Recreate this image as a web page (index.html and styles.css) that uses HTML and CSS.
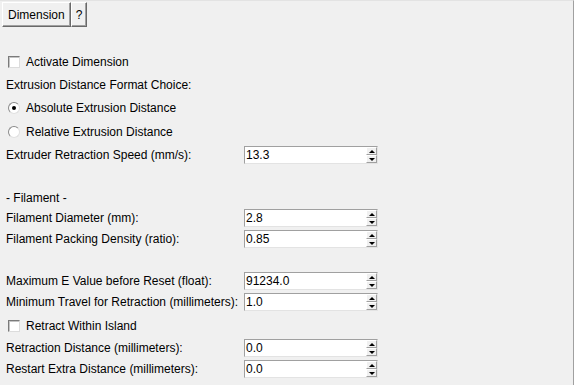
FILE: index.html
```html
<!DOCTYPE html>
<html lang="en">
<head>
<meta charset="UTF-8" />
<title>Dimension</title>
<link rel="stylesheet" href="styles.css">
</head>
<body>
  <div class="window">
    <div class="toolbar">
      <button class="tab">Dimension</button>
      <button class="tab help">?</button>
    </div>

    <div class="form">
      <label class="check-row first">
        <span class="checkbox"></span>
        <span>Activate Dimension</span>
      </label>

      <div class="text-row">Extrusion Distance Format Choice:</div>

      <label class="radio-row">
        <span class="radio checked"></span>
        <span>Absolute Extrusion Distance</span>
      </label>
      <label class="radio-row last">
        <span class="radio"></span>
        <span>Relative Extrusion Distance</span>
      </label>

      <div class="spin-row">
        <span class="label">Extruder Retraction Speed (mm/s):</span>
        <div class="spin"><span class="value">13.3</span><span class="arrows"><span class="up"></span><span class="down"></span></span></div>
      </div>

      <div class="blank"></div>
      <div class="text-row section">- Filament -</div>

      <div class="spin-row">
        <span class="label">Filament Diameter (mm):</span>
        <div class="spin"><span class="value">2.8</span><span class="arrows"><span class="up"></span><span class="down"></span></span></div>
      </div>
      <div class="spin-row">
        <span class="label">Filament Packing Density (ratio):</span>
        <div class="spin"><span class="value">0.85</span><span class="arrows"><span class="up"></span><span class="down"></span></span></div>
      </div>

      <div class="blank"></div>

      <div class="spin-row">
        <span class="label">Maximum E Value before Reset (float):</span>
        <div class="spin"><span class="value">91234.0</span><span class="arrows"><span class="up"></span><span class="down"></span></span></div>
      </div>
      <div class="spin-row">
        <span class="label">Minimum Travel for Retraction (millimeters):</span>
        <div class="spin"><span class="value">1.0</span><span class="arrows"><span class="up"></span><span class="down"></span></span></div>
      </div>

      <label class="check-row island">
        <span class="checkbox"></span>
        <span>Retract Within Island</span>
      </label>

      <div class="spin-row">
        <span class="label">Retraction Distance (millimeters):</span>
        <div class="spin"><span class="value">0.0</span><span class="arrows"><span class="up"></span><span class="down"></span></span></div>
      </div>
      <div class="spin-row">
        <span class="label">Restart Extra Distance (millimeters):</span>
        <div class="spin"><span class="value">0.0</span><span class="arrows"><span class="up"></span><span class="down"></span></span></div>
      </div>
    </div>
  </div>
</body>
</html>
```

FILE: styles.css
```css
:root {
  --face: #f0f0f0;
  --shadow: #a0a0a0;
  --dark: #696969;
  --light: #ffffff;
}

* {
  box-sizing: border-box;
}

html, body {
  margin: 0;
  height: 100%;
}

body {
  background: var(--face);
  font-family: "Liberation Sans", Arial, sans-serif;
  font-size: 12px;
  color: #000;
  overflow: hidden;
}

.window {
  width: 574px;
  height: 385px;
  border-top: 1px solid #e3e3e3;
  border-right: 1px solid var(--shadow);
}

.toolbar {
  display: flex;
  padding: 1px 0 0 2px;
  height: 27px;
}

.tab {
  font: inherit;
  height: 25px;
  padding: 0 5px;
  margin: 0;
  background: var(--face);
  color: #000;
  border: 1px solid;
  border-color: var(--light) var(--dark) var(--dark) var(--light);
  box-shadow: inset -1px -1px 0 var(--shadow);
}

.tab.help {
  padding: 0 4px;
}

.form {
  display: flex;
  flex-direction: column;
  padding-top: 22px;
}

.check-row,
.radio-row,
.text-row {
  display: flex;
  align-items: center;
  height: 23px;
  padding-left: 6px;
}

.check-row.island {
  height: 25px;
}

.radio-row.last {
  height: 26px;
}

.checkbox {
  width: 12px;
  height: 12px;
  margin: 0 6px 0 2px;
  background: #fff;
  border: 1px solid;
  border-color: #7a7a7a #dcdcdc #dcdcdc #7a7a7a;
  box-shadow: inset 1px 1px 0 #c4c4c4;
}

.radio {
  position: relative;
  width: 12px;
  height: 12px;
  margin: 0 6px 0 2px;
  border-radius: 50%;
  background: #fff;
  border: 1px solid;
  border-color: #8a8a8a #e0e0e0 #e0e0e0 #8a8a8a;
}

.radio.checked::after {
  content: "";
  position: absolute;
  left: 3px;
  top: 3px;
  width: 4px;
  height: 4px;
  border-radius: 50%;
  background: #000;
}

.spin-row {
  display: flex;
  align-items: flex-start;
  height: 21px;
  padding: 1px 0 0 6px;
}

.spin-row .label,
.text-row {
  white-space: nowrap;
}

.spin-row .label {
  width: 238px;
  line-height: 18px;
}

.blank {
  height: 21px;
}

.text-row.section {
  height: 21px;
}

.spin {
  display: flex;
  width: 134px;
  height: 18px;
  background: #fff;
  border: 1px solid;
  border-color: #a0a0a0 #e3e3e3 #e3e3e3 #a0a0a0;
}

.spin .value {
  flex: 1;
  line-height: 16px;
  padding-left: 1px;
}

.arrows {
  display: flex;
  flex-direction: column;
  width: 11px;
}

.arrows span {
  position: relative;
  flex: 1;
  background: var(--face);
  border: 1px solid;
  border-color: var(--light) var(--shadow) var(--shadow) var(--light);
}

.arrows span::after {
  content: "";
  position: absolute;
  left: 2px;
  top: 2px;
  border-left: 3px solid transparent;
  border-right: 3px solid transparent;
}

.arrows .up::after {
  border-bottom: 3px solid #000;
}

.arrows .down::after {
  border-top: 3px solid #000;
}
```
